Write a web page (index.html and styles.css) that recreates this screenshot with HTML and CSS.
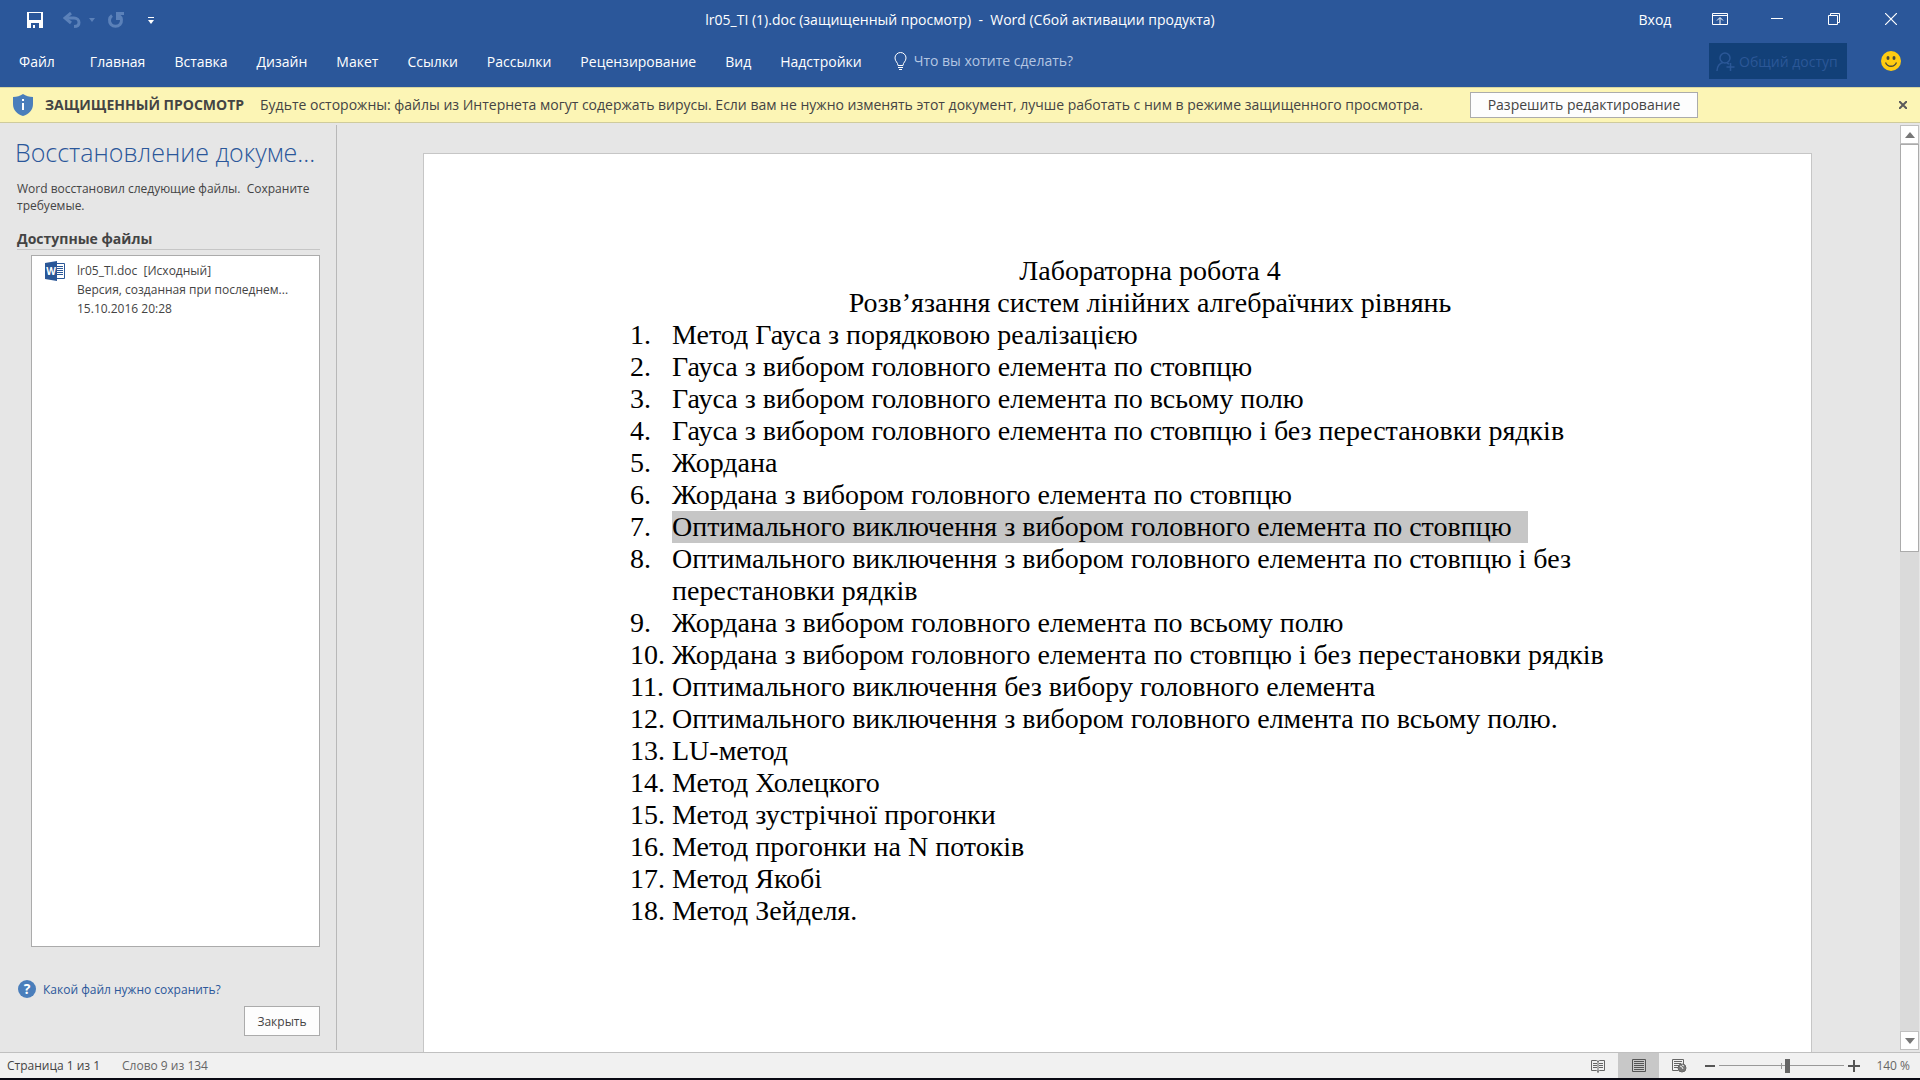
FILE: index.html
```
<!DOCTYPE html>
<html lang="ru">
<head>
<meta charset="utf-8">
<meta name="viewport" content="width=device-width, initial-scale=1">
<title>lr05_TI (1).doc - Word</title>
<link rel="stylesheet" href="styles.css">
</head>
<body>
<div class="app">
  <header class="ribbon">
    <div class="titlebar">
      <div class="quick-access">
        <button class="qa-button" type="button" aria-label="Сохранить">
          <svg width="16" height="16" viewBox="0 0 16 16"><path fill="#fff" fill-rule="evenodd" d="M0 0h16v16H0zM2 1v7h12V1zM4 11v5h2v-3h2v3h4v-5z"/></svg>
        </button>
        <button class="qa-button qa-undo" type="button" aria-label="Отменить" disabled>
          <svg width="18" height="16" viewBox="0 0 18 16" fill="none" stroke="#5b81b9" stroke-width="3"><path d="M2 6h9c3 0 5 2 5 4.500s-2 4-5 4"/><path d="M8 1L2 6l6 5"/></svg>
          <svg width="6" height="4" viewBox="0 0 6 4"><path fill="#5b81b9" d="M0 0h6L3 4z"/></svg>
        </button>
        <button class="qa-button" type="button" aria-label="Повторить" disabled>
          <svg width="17" height="17" viewBox="0 0 17 17"><path fill="none" stroke="#5b81b9" stroke-width="3" d="M5 3.500a6 6 0 1 0 7 0"/><path fill="#5b81b9" d="M9 0h8v3h-4v5H9z"/></svg>
        </button>
        <button class="qa-button qa-more" type="button" aria-label="Настройка панели быстрого доступа">
          <svg width="6" height="7" viewBox="0 0 6 7"><path fill="#fff" d="M0 0h6v1H0zM0 3h6L3 7z"/></svg>
        </button>
      </div>
      <div class="title">lr05_TI (1).doc (защищенный просмотр)&nbsp; -&nbsp; Word (Сбой активации продукта)</div>
      <div class="window-controls">
        <button class="sign-in" type="button">Вход</button>
        <button class="window-button" type="button" aria-label="Параметры отображения ленты">
          <svg width="16" height="12" viewBox="0 0 16 12" fill="none" stroke="#fff"><path d="M.5.5h15v11H.5zM0 2.500h16M8 11V5M5 7.500L8 4.500l3 3"/></svg>
        </button>
        <button class="window-button" type="button" aria-label="Свернуть">
          <svg width="12" height="12" viewBox="0 0 12 12" stroke="#fff"><path d="M0 5.500h12"/></svg>
        </button>
        <button class="window-button" type="button" aria-label="Восстановить">
          <svg width="12" height="12" viewBox="0 0 12 12" fill="none" stroke="#fff"><path d="M.5 2.500h9v9h-9zM2.500 2V.5h9v9H10"/></svg>
        </button>
        <button class="window-button" type="button" aria-label="Закрыть">
          <svg width="12" height="12" viewBox="0 0 12 12" stroke="#fff" stroke-width="1.200"><path d="M0 0l12 12M12 0L0 12"/></svg>
        </button>
      </div>
    </div>
    <div class="tabs-row">
      <nav class="tabs">
        <a class="tab tab-file" href="#">Файл</a>
        <a class="tab" href="#">Главная</a>
        <a class="tab" href="#">Вставка</a>
        <a class="tab" href="#">Дизайн</a>
        <a class="tab" href="#">Макет</a>
        <a class="tab" href="#">Ссылки</a>
        <a class="tab" href="#">Рассылки</a>
        <a class="tab" href="#">Рецензирование</a>
        <a class="tab" href="#">Вид</a>
        <a class="tab" href="#">Надстройки</a>
      </nav>
      <label class="tell-me">
        <svg width="13" height="19" viewBox="0 0 13 19" fill="none" stroke="#fff"><path d="M4 13.500c0-3-3-4-3-7.500a5.500 5.500 0 0 1 11 0c0 3.500-3 4.500-3 7.500zM4 15.500h5M5 17.500h3"/></svg>
        <input type="text" placeholder="Что вы хотите сделать?" aria-label="Что вы хотите сделать?">
      </label>
      <button class="share" type="button" disabled>
        <svg width="19" height="20" viewBox="0 0 19 20" fill="none" stroke="#2b5797" stroke-width="1.500"><circle cx="9" cy="6" r="5"/><path d="M1 19c0-5 3-8 6-8.500M11 11l2 1M14.500 11v8M10.500 15h8"/></svg>
        <span>Общий доступ</span>
      </button>
      <button class="feedback" type="button" aria-label="Отзыв">
        <svg width="20" height="20" viewBox="0 0 20 20"><circle cx="10" cy="10" r="10" fill="#fc1"/><ellipse cx="7" cy="7" rx="1.500" ry="2" fill="#4a4a3a"/><ellipse cx="13" cy="7" rx="1.500" ry="2" fill="#4a4a3a"/><path d="M4.500 11.500c2 5 9 5 11 0" fill="none" stroke="#4a4a3a" stroke-width="1.300"/></svg>
      </button>
    </div>
  </header>

  <section class="warning">
    <svg width="20" height="22" viewBox="0 0 20 22"><path fill="#4a7ebb" d="M10 0c3 2 6 3 10 3v7c0 6-4 10-10 12C4 20 0 16 0 10V3c4 0 7-1 10-3z"/><path fill="#fff" d="M9 5h2v2H9zM9 9h2v7H9z"/></svg>
    <strong class="warning-title">ЗАЩИЩЕННЫЙ ПРОСМОТР</strong>
    <span class="warning-text">Будьте осторожны: файлы из Интернета могут содержать вирусы. Если вам не нужно изменять этот документ, лучше работать с ним в режиме защищенного просмотра.</span>
    <button class="enable-editing" type="button">Разрешить редактирование</button>
    <button class="warning-close" type="button" aria-label="Закрыть сообщение">
      <svg width="8" height="8" viewBox="0 0 8 8" stroke="#5a5a5a" stroke-width="2"><path d="M0 0l8 8M8 0L0 8"/></svg>
    </button>
  </section>

  <main class="workspace">
    <aside class="recovery">
      <h1 class="recovery-title">Восстановление докуме...</h1>
      <p class="recovery-note">Word восстановил следующие файлы.&nbsp; Сохраните требуемые.</p>
      <h2 class="recovery-heading">Доступные файлы</h2>
      <ul class="file-list">
        <li class="file">
          <svg width="20" height="20" viewBox="0 0 20 20"><path fill="#fff" stroke="#2b5797" d="M10 2.500h9.500v15H10z"/><path stroke="#2b5797" d="M12 5.500h6M12 7.500h6M12 9.500h6M12 11.500h6M12 13.500h6"/><path fill="#2b5797" d="M0 2l12-2v20L0 18z"/><text x="6" y="14" class="word-mark">W</text></svg>
          <div class="file-info">
            <div>lr05_TI.doc&nbsp; [Исходный]</div>
            <div>Версия, созданная при последнем...</div>
            <div>15.10.2016 20:28</div>
          </div>
        </li>
      </ul>
      <a class="help-link" href="#">
        <svg width="18" height="18" viewBox="0 0 18 18"><circle cx="9" cy="9" r="9" fill="#4a7ebb"/><text x="9" y="14" class="help-mark">?</text></svg>
        <span>Какой файл нужно сохранить?</span>
      </a>
      <button class="close-pane" type="button">Закрыть</button>
    </aside>

    <div class="canvas">
      <article class="page" lang="uk">
        <p class="doc-title">Лабораторна робота 4</p>
        <p class="doc-title">Розв’язання систем лінійних алгебраїчних рівнянь</p>
        <ol class="methods">
          <li><span>1.</span><span>Метод Гауса з порядковою реалізацією</span></li>
          <li><span>2.</span><span>Гауса з вибором головного елемента по стовпцю</span></li>
          <li><span>3.</span><span>Гауса з вибором головного елемента по всьому полю</span></li>
          <li><span>4.</span><span>Гауса з вибором головного елемента по стовпцю і без перестановки рядків</span></li>
          <li><span>5.</span><span>Жордана</span></li>
          <li><span>6.</span><span>Жордана з вибором головного елемента по стовпцю</span></li>
          <li><span>7.</span><span class="selected">Оптимального виключення з вибором головного елемента по стовпцю</span></li>
          <li><span>8.</span><span>Оптимального виключення з вибором головного елемента по стовпцю і без перестановки рядків</span></li>
          <li><span>9.</span><span>Жордана з вибором головного елемента по всьому полю</span></li>
          <li><span>10.</span><span>Жордана з вибором головного елемента по стовпцю і без перестановки рядків</span></li>
          <li><span>11.</span><span>Оптимального виключення без вибору головного елемента</span></li>
          <li><span>12.</span><span>Оптимального виключення з вибором головного елмента по всьому полю.</span></li>
          <li><span>13.</span><span>LU-метод</span></li>
          <li><span>14.</span><span>Метод Холецкого</span></li>
          <li><span>15.</span><span>Метод зустрічної прогонки</span></li>
          <li><span>16.</span><span>Метод прогонки на N потоків</span></li>
          <li><span>17.</span><span>Метод Якобі</span></li>
          <li><span>18.</span><span>Метод Зейделя.</span></li>
        </ol>
      </article>
    </div>

    <div class="scrollbar">
      <button class="scroll-button" type="button" aria-label="Вверх"><svg width="10" height="6" viewBox="0 0 10 6"><path fill="#777" d="M0 6h10L5 0z"/></svg></button>
      <div class="scroll-track"><div class="scroll-thumb"></div></div>
      <button class="scroll-button" type="button" aria-label="Вниз"><svg width="10" height="6" viewBox="0 0 10 6"><path fill="#777" d="M0 0h10L5 6z"/></svg></button>
    </div>
  </main>

  <footer class="status">
    <span class="status-page">Страница 1 из 1</span>
    <span class="status-words">Слово 9 из 134</span>
    <div class="views">
      <button class="view" type="button" aria-label="Режим чтения">
        <svg width="14" height="14" viewBox="0 0 14 14" fill="none" stroke="#666"><path d="M.5 1.500h5l1.500 1 1.500-1h5v10h-5L7 12.500l-1.500-1h-5zM7 2v12M2 4.500h4M2 6.500h4M2 8.500h4M8 4.500h4M8 6.500h4M8 8.500h4"/></svg>
      </button>
      <button class="view view-active" type="button" aria-label="Разметка страницы">
        <svg width="14" height="14" viewBox="0 0 14 14" fill="none" stroke="#555"><path d="M.5.5h13v12H.5zM2 2.500h10M2 4.500h10M2 6.500h10M2 8.500h10M2 10.500h10"/></svg>
      </button>
      <button class="view" type="button" aria-label="Веб-документ">
        <svg width="15" height="14" viewBox="0 0 15 14" fill="none" stroke="#666"><path d="M6 11.500H.5V.5h11V5M2 2.500h8M2 4.500h7M2 6.500h5M2 8.500h4"/><circle cx="10" cy="9" r="4" fill="#777"/><path stroke="#f0f0f0" d="M8 7l2 1 1 2M10 6l2 1"/></svg>
      </button>
    </div>
    <div class="zoom">
      <button class="zoom-button" type="button" aria-label="Уменьшить"><svg width="10" height="12" viewBox="0 0 10 12"><path fill="#555" d="M0 5h10v2H0z"/></svg></button>
      <input class="zoom-slider" type="range" min="0" max="100" value="55" aria-label="Масштаб">
      <button class="zoom-button" type="button" aria-label="Увеличить"><svg width="12" height="12" viewBox="0 0 12 12"><path fill="#555" d="M0 5h5V0h2v5h5v2H7v5H5V7H0z"/></svg></button>
      <span class="zoom-value">140 %</span>
    </div>
  </footer>
</div>
</body>
</html>
```
FILE: styles.css
```
* {
  box-sizing: border-box;
}

body {
  margin: 0;
  font: 14px/20px "Open Sans", "Noto Sans", sans-serif;
  color: #444;
  background: #e6e6e6;
}

button,
input {
  margin: 0;
  padding: 0;
  border: 0;
  background: none;
  font: inherit;
  color: inherit;
}

a {
  color: inherit;
  text-decoration: none;
}

h1, h2, p, ul, ol {
  margin: 0;
  padding: 0;
  list-style: none;
}

svg {
  display: block;
  flex: none;
}

.app {
  display: flex;
  flex-direction: column;
  min-height: 100vh;
  border-bottom: 2px solid #0a0a14;
}

/* Ribbon */

.ribbon {
  height: 87px;
  background: #2b579a;
  color: #fff;
}

.titlebar {
  display: grid;
  grid-template-columns: 1fr auto 1fr;
  height: 40px;
}

.quick-access {
  display: flex;
  align-items: center;
  gap: 20px;
  padding-left: 27px;
}

.qa-button {
  display: flex;
  align-items: center;
  gap: 8px;
}

.qa-undo {
  margin-right: -8px;
}

.qa-more {
  margin-left: 4px;
}

.title {
  line-height: 40px;
  white-space: nowrap;
}

.window-controls {
  display: flex;
  justify-content: flex-end;
  padding-right: 1px;
}

.sign-in {
  width: 72px;
}

.window-button {
  display: flex;
  align-items: center;
  justify-content: center;
  width: 57px;
  height: 38px;
}

.tabs-row {
  display: flex;
  align-items: flex-start;
  padding: 3px 19px 0;
}

.tabs {
  display: flex;
  gap: 29px;
}

.tab {
  line-height: 38px;
}

.tab-file {
  margin-right: 6px;
}

.tell-me {
  display: flex;
  align-items: center;
  flex: 1;
  gap: 7px;
  height: 36px;
  margin-left: 32px;
}

.tell-me input {
  width: 200px;
}

.tell-me input::placeholder {
  color: #b4c6e2;
  opacity: 1;
}

.share {
  display: flex;
  align-items: center;
  gap: 4px;
  width: 138px;
  height: 36px;
  margin-right: 34px;
  padding: 2px 0 0 7px;
  background: #124078;
  color: #2b5797;
  white-space: nowrap;
}

.feedback {
  display: flex;
  align-items: center;
  height: 36px;
}

/* Protected view message bar */

.warning {
  display: flex;
  align-items: center;
  height: 36px;
  padding: 0 13px;
  border-top: 1px solid #d8d6a0;
  border-bottom: 1px solid #cfcb9c;
  background: #fcf5b5;
}

.warning-title {
  min-width: 215px;
  margin-left: 12px;
}

.warning-text {
  flex: 0 1 1210px;
}

.enable-editing {
  width: 228px;
  height: 26px;
  border: 1px solid #ababab;
  background: #fdfdfd;
}

.warning-close {
  margin-left: auto;
}

/* Recovery pane */

.workspace {
  display: flex;
  flex: 1;
}

.recovery {
  display: flex;
  flex-direction: column;
  width: 337px;
  margin: 2px 0;
  padding: 7px 16px 14px 17px;
  border-right: 1px solid #b8b8b8;
  font-size: 12px;
  line-height: 17px;
}

.recovery-title {
  margin-left: -2px;
  font-size: 25px;
  font-weight: 300;
  line-height: 40px;
  color: #2b579a;
  white-space: nowrap;
}

.recovery-note {
  margin-top: 8px;
}

.recovery-heading {
  margin-top: 15px;
  border-bottom: 1px solid #c6c6c6;
  font-size: 14px;
  line-height: 20px;
}

.file-list {
  flex: 1;
  margin: 5px 0 0 14px;
  padding: 5px 13px;
  border: 1px solid #ababab;
  background: #fff;
}

.file {
  display: flex;
  gap: 12px;
  line-height: 19px;
  white-space: nowrap;
}

.word-mark {
  font: bold 10px "Open Sans", sans-serif;
  fill: #fff;
  text-anchor: middle;
}

.help-link {
  display: flex;
  align-items: center;
  gap: 7px;
  margin: 33px 0 0 1px;
  color: #2b579a;
}

.help-mark {
  font: bold 14px "Open Sans", sans-serif;
  fill: #fff;
  text-anchor: middle;
}

.close-pane {
  align-self: flex-end;
  width: 76px;
  height: 30px;
  margin-top: 8px;
  border: 1px solid #ababab;
  background: #fdfdfd;
}

/* Document */

.canvas {
  display: flex;
  flex: 1;
  padding: 30px 88px 0 86px;
}

.page {
  flex: 1;
  padding: 101px 141px 60px 206px;
  border: 1px solid #c6c6c6;
  border-bottom: 0;
  background: #fff;
  font: 28px/32px "Liberation Serif", "Times New Roman", serif;
  color: #000;
}

.doc-title {
  text-align: center;
}

.methods li {
  display: grid;
  grid-template-columns: 42px 1fr;
}

.methods .selected {
  justify-self: start;
  padding-right: 16px;
  background: #c6c6c6;
}

.scrollbar {
  display: flex;
  flex-direction: column;
  width: 19px;
  margin: 2px 1px 2px 0;
}

.scroll-button {
  display: flex;
  align-items: center;
  justify-content: center;
  height: 19px;
  border: 1px solid #c0c0c0;
  background: #fff;
}

.scroll-track {
  flex: 1;
  background: #dadada;
}

.scroll-thumb {
  height: 46%;
  border: 1px solid #ababab;
  background: #fff;
}

/* Status bar */

.status {
  display: flex;
  align-items: center;
  height: 26px;
  padding: 0 10px 0 7px;
  border-top: 1px solid #c0c0c0;
  background: #f1f1f1;
  font-size: 12px;
}

.status-page {
  min-width: 115px;
}

.status-words {
  color: #666;
}

.views {
  display: flex;
  align-self: stretch;
  margin-left: auto;
}

.view {
  display: flex;
  align-items: center;
  justify-content: center;
  width: 41px;
}

.view-active {
  background: #c8c8c8;
}

.zoom {
  display: flex;
  align-items: center;
  margin-left: 5px;
}

.zoom-slider {
  appearance: none;
  width: 125px;
  height: 16px;
  margin: 0 4px;
  background:
    linear-gradient(#999, #999) center / 1px 6px no-repeat,
    linear-gradient(#999, #999) center / 100% 1px no-repeat;
}

.zoom-slider::-webkit-slider-thumb {
  appearance: none;
  width: 5px;
  height: 14px;
  background: #666;
}

.zoom-value {
  width: 50px;
  color: #666;
  text-align: right;
}
```
